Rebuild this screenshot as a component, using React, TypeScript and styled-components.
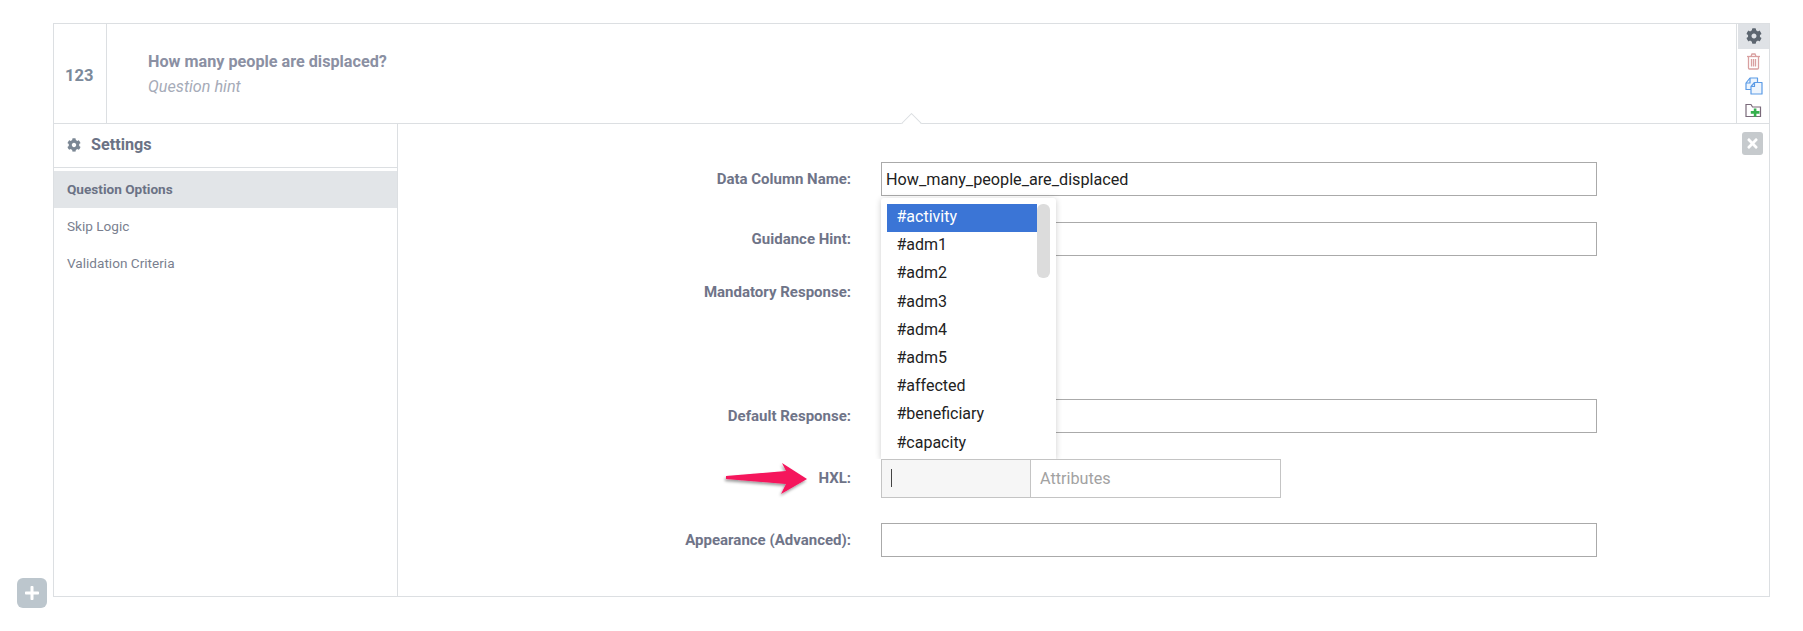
import React from "react";
import styled, { createGlobalStyle } from "styled-components";
import { FaCog, FaTimes, FaPlus } from "react-icons/fa";

const Global = createGlobalStyle`
  html, body { margin: 0; padding: 0; background: #fff; }
  body { font-family: Roboto, "Liberation Sans", sans-serif; }
`;

const Page = styled.div`
  position: relative;
  width: 1803px;
  height: 631px;
  padding: 23px 33px 0 53px;
  box-sizing: border-box;
  overflow: hidden;
`;

const Card = styled.div`
  width: 1717px;
  height: 574px;
  box-sizing: border-box;
  border: 1px solid #dcdfe2;
  display: flex;
  flex-direction: column;
`;

const Question = styled.div`
  position: relative;
  height: 100px;
  flex: none;
  box-sizing: border-box;
  border-bottom: 1px solid #dcdfe2;
  display: flex;
`;

const Notch = styled.div`
  position: absolute;
  left: 847px;
  bottom: -1px;
  width: 22px;
  height: 11px;
  overflow: hidden;
  &::after {
    content: "";
    position: absolute;
    left: 3px;
    top: 3px;
    width: 15px;
    height: 15px;
    box-sizing: border-box;
    background: #fff;
    border: 1px solid #dcdfe2;
    transform: rotate(45deg);
  }
`;

const NumberCell = styled.div`
  width: 53px;
  flex: none;
  box-sizing: border-box;
  border-right: 1px solid #dcdfe2;
  padding: 42px 0 0 11px;
  font-size: 16.5px;
  line-height: 20px;
  font-weight: 700;
  color: #7c8a9b;
`;

const QuestionText = styled.div`
  flex: 1;
  padding: 28px 0 0 41px;
`;

const Title = styled.div`
  font-size: 16.2px;
  line-height: 20px;
  font-weight: 700;
  color: #8b90a3;
`;

const Hint = styled.div`
  margin-top: 5px;
  font-size: 16.2px;
  line-height: 20px;
  font-style: italic;
  color: #a6abb8;
`;

const Actions = styled.div`
  width: 33px;
  flex: none;
  box-sizing: border-box;
  border-left: 1px solid #dcdfe2;
  display: flex;
  flex-direction: column;
`;

const ActionButton = styled.div<{ $active?: boolean; $color: string }>`
  height: 26px;
  margin-left: 1px;
  display: flex;
  align-items: center;
  justify-content: center;
  font-size: 16px;
  color: ${(p) => p.$color};
  background: ${(p) => (p.$active ? "#dfe2e6" : "transparent")};
`;

const Body = styled.div`
  flex: 1;
  display: flex;
  min-height: 0;
`;

const Sidebar = styled.div`
  width: 344px;
  flex: none;
  box-sizing: border-box;
  border-right: 1px solid #dcdfe2;
`;

const SidebarHead = styled.div`
  height: 44px;
  box-sizing: border-box;
  border-bottom: 1px solid #dcdfe2;
  padding: 0 0 2px 13px;
  display: flex;
  align-items: center;
  gap: 10px;
  font-size: 16.2px;
  font-weight: 700;
  color: #6b7285;
  svg {
    font-size: 14px;
    color: #7b8794;
  }
`;

const Nav = styled.div`
  padding-top: 3px;
`;

const NavItem = styled.div<{ $active?: boolean }>`
  height: 37px;
  padding: 0 0 1px 13px;
  box-sizing: border-box;
  display: flex;
  align-items: center;
  font-size: ${(p) => (p.$active ? "13.6px" : "13.6px")};
  font-weight: ${(p) => (p.$active ? 700 : 400)};
  color: ${(p) => (p.$active ? "#6b7285" : "#7a7f8f")};
  background: ${(p) => (p.$active ? "#e2e5e8" : "transparent")};
`;

const Content = styled.div`
  position: relative;
  flex: 1;
  padding-top: 38px;
`;

const CloseButton = styled.div`
  position: absolute;
  top: 8px;
  right: 6px;
  width: 21px;
  height: 23px;
  border-radius: 3px;
  background: #c6cacd;
  color: #fff;
  display: flex;
  align-items: center;
  justify-content: center;
  font-size: 15px;
`;

const Row = styled.div<{ $gap: number }>`
  display: flex;
  align-items: flex-start;
  margin-bottom: ${(p) => p.$gap}px;
`;

const Label = styled.div<{ $top?: number }>`
  width: 453px;
  flex: none;
  text-align: right;
  font-size: 15px;
  line-height: 20px;
  font-weight: 700;
  color: #6f7488;
  padding-top: ${(p) => p.$top ?? 7}px;
`;

const Input = styled.div`
  margin-left: 30px;
  width: 716px;
  height: 34px;
  box-sizing: border-box;
  border: 1px solid #aaa;
  padding-left: 4px;
  font-size: 16.2px;
  line-height: 34px;
  color: #222;
`;

const HxlGroup = styled.div`
  margin-left: 30px;
  width: 400px;
  height: 39px;
  box-sizing: border-box;
  border: 1px solid #c4c4c4;
  display: flex;
`;

const HxlTag = styled.div`
  width: 149px;
  flex: none;
  box-sizing: border-box;
  border-right: 1px solid #c4c4c4;
  background: #f6f6f6;
  padding: 9px 0 0 9px;
`;

const Caret = styled.div`
  width: 1px;
  height: 18px;
  background: #444;
`;

const HxlAttrs = styled.div`
  padding-left: 9px;
  font-size: 16.2px;
  line-height: 38px;
  color: #a2a2a2;
`;

const Dropdown = styled.div`
  position: absolute;
  left: 881px;
  top: 198px;
  width: 175px;
  height: 261px;
  box-sizing: border-box;
  padding: 6px 0 0 6px;
  background: #fff;
  box-shadow: 0 1px 6px rgba(0, 0, 0, 0.2);
  clip-path: inset(-8px -8px 0 -8px);
  border-radius: 3px 3px 0 0;
  z-index: 3;
`;

const Option = styled.div<{ $active?: boolean }>`
  width: 150px;
  height: 28.2px;
  box-sizing: border-box;
  padding-left: 9.5px;
  font-size: 16px;
  line-height: 26.6px;
  color: ${(p) => (p.$active ? "#fff" : "#222")};
  background: ${(p) => (p.$active ? "#3b75d6" : "transparent")};
`;

const Scrollbar = styled.div`
  position: absolute;
  left: 156px;
  top: 6px;
  width: 13px;
  height: 74px;
  border-radius: 6px;
  background: #dcdcdc;
`;

const Arrow = styled.svg`
  position: absolute;
  left: 722px;
  top: 458px;
  z-index: 2;
  overflow: visible;
`;

const AddButton = styled.div`
  position: absolute;
  left: 17px;
  top: 578px;
  width: 30px;
  height: 30px;
  border-radius: 6px;
  background: #bcc6cd;
  color: #fff;
  display: flex;
  align-items: center;
  justify-content: center;
  font-size: 16px;
`;

const options = ["#activity", "#adm1", "#adm2", "#adm3", "#adm4", "#adm5", "#affected", "#beneficiary", "#capacity"];

export default function App() {
  return (
    <Page>
      <Global />
      <Card>
        <Question>
          <NumberCell>123</NumberCell>
          <QuestionText>
            <Title>How many people are displaced?</Title>
            <Hint>Question hint</Hint>
          </QuestionText>
          <Actions>
            <ActionButton $active $color="#5d6670"><FaCog /></ActionButton>
            <ActionButton $color="#d9a0a0">
              <svg width="15" height="17" viewBox="0 0 15 17" fill="none" stroke="currentColor" strokeWidth="1.3">
                <path d="M1 3.5 H14" />
                <path d="M5 3.5 L6 1 H9 L10 3.5" />
                <path d="M2.5 3.5 V15 Q2.5 16 3.5 16 H11.5 Q12.5 16 12.5 15 V3.5" />
                <path d="M5.5 6 V13.5 M7.5 6 V13.5 M9.5 6 V13.5" />
              </svg>
            </ActionButton>
            <ActionButton $color="#5b9be6">
              <svg width="18" height="18" viewBox="0 0 18 18" fill="#eef5fd" stroke="currentColor" strokeWidth="1.2" strokeLinejoin="round">
                <path d="M5 1 H12.5 V12.5 H1 V6 Z" />
                <path d="M1 6 H5 V1" fill="none" />
                <path d="M9.5 5.5 H17 V17 H6 V9.5 Z" />
                <path d="M6 9.5 H9.5 V5.5" fill="none" />
              </svg>
            </ActionButton>
            <ActionButton $color="#6b7280">
              <svg width="17" height="15" viewBox="0 0 17 15" fill="none">
                <path d="M1 13.5 V1.5 H6 L7.5 4 H15.5 V13.5 Z" stroke="#7a6a7a" strokeWidth="1.2" />
                <path d="M8.8 5.5 h2.6 v2.6 H14.5 v2.6 h-3.1 v3 H8.8 v-3 H5.8 V8.1 h3 Z" fill="#35b04d" />
              </svg>
            </ActionButton>
          </Actions>
          <Notch />
        </Question>
        <Body>
          <Sidebar>
            <SidebarHead><FaCog />Settings</SidebarHead>
            <Nav>
              <NavItem $active>Question Options</NavItem>
              <NavItem>Skip Logic</NavItem>
              <NavItem>Validation Criteria</NavItem>
            </Nav>
          </Sidebar>
          <Content>
            <CloseButton><FaTimes /></CloseButton>
            <Row $gap={26}>
              <Label>Data Column Name:</Label>
              <Input>How_many_people_are_displaced</Input>
            </Row>
            <Row $gap={26}>
              <Label>Guidance Hint:</Label>
              <Input />
            </Row>
            <Row $gap={97}>
              <Label $top={0}>Mandatory Response:</Label>
            </Row>
            <Row $gap={26}>
              <Label>Default Response:</Label>
              <Input />
            </Row>
            <Row $gap={25}>
              <Label $top={9}>HXL:</Label>
              <HxlGroup>
                <HxlTag><Caret /></HxlTag>
                <HxlAttrs>Attributes</HxlAttrs>
              </HxlGroup>
            </Row>
            <Row $gap={0}>
              <Label>Appearance (Advanced):</Label>
              <Input />
            </Row>
          </Content>
        </Body>
      </Card>
      <Dropdown>
        {options.map((o, i) => (
          <Option key={o} $active={i === 0}>{o}</Option>
        ))}
        <Scrollbar />
      </Dropdown>
      <Arrow width="86" height="40" viewBox="0 0 86 40">
        <defs>
          <filter id="arrowShadow" x="-10%" y="-20%" width="125%" height="160%">
            <feDropShadow dx="-1" dy="2" stdDeviation="1.5" floodColor="#000" floodOpacity="0.4" />
          </filter>
        </defs>
        <path d="M4 18 L64 13 L60 5 L85 21 L59 36 L64 26 L4 21 Z" fill="#f5135c" filter="url(#arrowShadow)" />
      </Arrow>
      <AddButton><FaPlus /></AddButton>
    </Page>
  );
}
